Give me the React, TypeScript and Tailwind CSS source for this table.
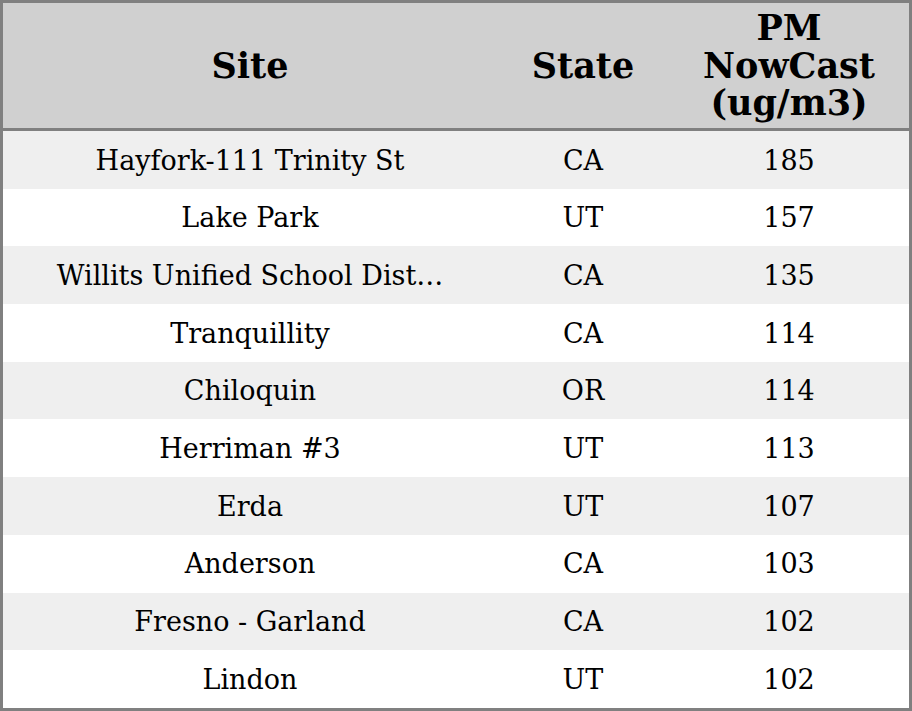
const ROWS: { site: string; state: string; pm: number }[] = [
  { site: 'Hayfork-111 Trinity St', state: 'CA', pm: 185 },
  { site: 'Lake Park', state: 'UT', pm: 157 },
  { site: 'Willits Unified School Dist…', state: 'CA', pm: 135 },
  { site: 'Tranquillity', state: 'CA', pm: 114 },
  { site: 'Chiloquin', state: 'OR', pm: 114 },
  { site: 'Herriman #3', state: 'UT', pm: 113 },
  { site: 'Erda', state: 'UT', pm: 107 },
  { site: 'Anderson', state: 'CA', pm: 103 },
  { site: 'Fresno - Garland', state: 'CA', pm: 102 },
  { site: 'Lindon', state: 'UT', pm: 102 },
];

const COLS = 'grid grid-cols-[494px_172px_240px]';

export default function App() {
  return (
    <div className="h-[711px] w-[912px] border-[3px] border-[#808080] bg-white text-black [font-family:'DejaVu_Serif',serif]">
      <div className={`${COLS} h-[128px] border-b-[3px] border-[#808080] bg-[#d0d0d0] text-[35px] font-bold leading-[37.5px]`}>
        <div className="flex items-center justify-center">Site</div>
        <div className="flex items-center justify-center">State</div>
        <div className="flex items-center justify-center text-center">
          PM
          <br />
          NowCast
          <br />
          (ug/m3)
        </div>
      </div>
      {ROWS.map((row, i) => (
        <div
          key={row.site}
          className={`${COLS} h-[57.7px] pt-[2px] text-[27px] ${i % 2 === 0 ? 'bg-[#efefef]' : 'bg-white'}`}
        >
          <div className="flex items-center justify-center whitespace-nowrap">{row.site}</div>
          <div className="flex items-center justify-center">{row.state}</div>
          <div className="flex items-center justify-center">{row.pm}</div>
        </div>
      ))}
    </div>
  );
}
